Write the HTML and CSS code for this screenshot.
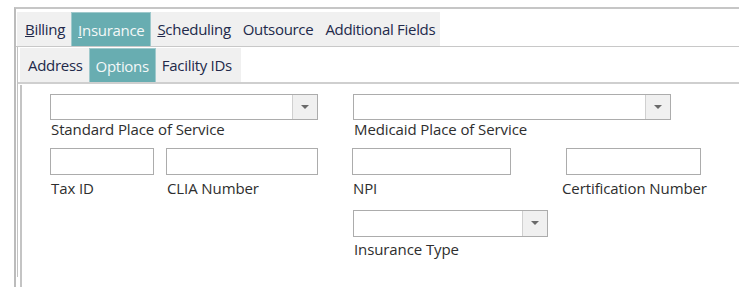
FILE: index.html
```html
<!DOCTYPE html>
<html lang="en">
<head>
  <meta charset="UTF-8">
  <title>Insurance Options</title>
  <link rel="stylesheet" href="styles.css">
</head>
<body>
<div class="frame">
  <div class="tab-row">
    <div class="tab-strip">
      <span class="tab"><u>B</u>illing</span>
      <span class="tab active"><u>I</u>nsurance</span>
      <span class="tab"><u>S</u>cheduling</span>
      <span class="tab">Outsource</span>
      <span class="tab">Additional Fields</span>
    </div>
  </div>
  <div class="inner">
    <div class="tab-row sub">
      <div class="tab-strip">
        <span class="tab">Address</span>
        <span class="tab active">Options</span>
        <span class="tab">Facility IDs</span>
      </div>
    </div>
    <div class="content">
      <div class="form-row">
        <div class="field w-std">
          <div class="combo"><span class="combo-text"></span><span class="combo-btn"></span></div>
          <label>Standard Place of Service</label>
        </div>
        <div class="field w-med">
          <div class="combo"><span class="combo-text"></span><span class="combo-btn"></span></div>
          <label>Medicaid Place of Service</label>
        </div>
      </div>
      <div class="form-row row2">
        <div class="field w-tax">
          <input type="text">
          <label>Tax ID</label>
        </div>
        <div class="field w-clia">
          <input type="text">
          <label>CLIA Number</label>
        </div>
        <div class="field w-npi">
          <input type="text">
          <label>NPI</label>
        </div>
        <div class="field w-cert">
          <input type="text">
          <label>Certification Number</label>
        </div>
      </div>
      <div class="form-row row3">
        <div class="field w-type">
          <div class="combo"><span class="combo-text"></span><span class="combo-btn"></span></div>
          <label>Insurance Type</label>
        </div>
      </div>
    </div>
  </div>
</div>
</body>
</html>
```

FILE: styles.css
```css
body {
  margin: 0;
  background: #fff;
  font-family: 'Open Sans', 'Noto Sans', sans-serif;
  font-size: 15px;
  color: #2e2e2e;
}
.frame {
  margin: 7px 0 0 14px;
  height: 280px;
  border-left: 2px solid #bcbcbc;
  border-top: 2px solid #c6c6c6;
}
.tab-row {
  padding-top: 3px;
  padding-left: 1px;
  border-bottom: 1px solid #c8c8c8;
}
.tab-strip {
  display: inline-flex;
  background: #f0f0f0;
  height: 34px;
  align-items: stretch;
  width: 423px;
  padding-left: 2px;
  box-sizing: border-box;
}
.tab {
  display: flex;
  align-items: center;
  padding: 0 6px;
  color: #22294a;
  letter-spacing: -0.3px;
  white-space: nowrap;
}
.tab u {
  text-decoration-thickness: 1px;
}
.tab.active {
  background: #68adb1;
  color: #f4f8f8;
  border: 1px solid #9fc9cc;
  border-bottom: 0;
}
.inner {
  margin-left: 1px;
  border-left: 1px solid #c2c2c2;
  height: 230px;
}
.tab-row.sub {
  padding-top: 1px;
  padding-left: 2px;
  border-bottom: 2px solid #cfcfcf;
}
.tab-row.sub .tab-strip {
  width: 221px;
  padding-left: 2px;
}
.content {
  margin: 1px 0 0 2px;
  border-left: 2px solid #c4c4c4;
  height: 200px;
  padding: 9px 0 0 28px;
}
.form-row {
  display: flex;
}
.row2 {
  margin-top: 11px;
}
.row3 {
  margin-top: 14px;
  padding-left: 303px;
}
.field {
  display: flex;
  flex-direction: column;
}
.field label {
  padding-left: 1px;
  line-height: 16px;
  margin-top: 1px;
  white-space: nowrap;
  letter-spacing: -0.1px;
}
.combo {
  display: flex;
  height: 24px;
  border: 1px solid #acacac;
  background: #fff;
}
.row3 .combo {
  height: 25px;
}
.row3 .field label {
  margin-top: 4px;
}
.combo-text {
  flex: 1;
}
.combo-btn {
  width: 24px;
  background: #f0f0f0;
  border-left: 1px solid #d0d0d0;
  position: relative;
}
.combo-btn::after {
  content: "";
  position: absolute;
  left: 8px;
  top: 10px;
  border-left: 4px solid transparent;
  border-right: 4px solid transparent;
  border-top: 4px solid #6a6a6a;
}
input {
  box-sizing: border-box;
  height: 27px;
  border: 1px solid #acacac;
  margin: 0;
}
.row2 .field label {
  margin-top: 5px;
}
.w-std { width: 268px; margin-right: 35px; }
.w-med { width: 318px; }
.w-tax { width: 104px; margin-right: 12px; }
.w-clia { width: 152px; margin-right: 34px; }
.w-npi { width: 159px; margin-right: 50px; }
.w-cert { width: 140px; }
.w-cert input { margin-left: 5px; width: 135px; }
.w-type { width: 195px; }
```
